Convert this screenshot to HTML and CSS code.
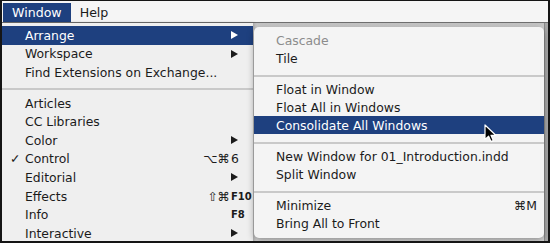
FILE: index.html
```html
<!DOCTYPE html>
<html>
<head>
<meta charset="utf-8" />
<link rel="stylesheet" href="styles.css">
</head>
<body>
<div class="screen">
  <div class="menubar">
    <span class="title active">Window</span>
    <span class="title">Help</span>
  </div>
  <div class="desk">
    <div class="edge"></div>
  </div>

  <!-- Window menu -->
  <div class="menu main">
    <div class="item hl"><span class="chk"></span><span class="label">Arrange</span><span class="arrow"></span></div>
    <div class="item"><span class="chk"></span><span class="label">Workspace</span><span class="arrow"></span></div>
    <div class="item"><span class="chk"></span><span class="label">Find Extensions on Exchange...</span></div>
    <div class="sep"></div>
    <div class="item"><span class="chk"></span><span class="label">Articles</span></div>
    <div class="item"><span class="chk"></span><span class="label">CC Libraries</span></div>
    <div class="item"><span class="chk"></span><span class="label">Color</span><span class="arrow"></span></div>
    <div class="item"><span class="chk">✓</span><span class="label">Control</span><span class="mods">⌥⌘</span><span class="key">6</span></div>
    <div class="item"><span class="chk"></span><span class="label">Editorial</span><span class="arrow"></span></div>
    <div class="item"><span class="chk"></span><span class="label">Effects</span><span class="mods">⇧⌘</span><span class="key small">F10</span></div>
    <div class="item"><span class="chk"></span><span class="label">Info</span><span class="mods"></span><span class="key small">F8</span></div>
    <div class="item"><span class="chk"></span><span class="label">Interactive</span><span class="arrow"></span></div>
  </div>

  <!-- Arrange submenu -->
  <div class="menu sub">
    <div class="item off"><span class="label">Cascade</span></div>
    <div class="item"><span class="label">Tile</span></div>
    <div class="sep"></div>
    <div class="item"><span class="label">Float in Window</span></div>
    <div class="item"><span class="label">Float All in Windows</span></div>
    <div class="item hl"><span class="label">Consolidate All Windows</span>
      <svg class="cursor" width="13" height="19" viewBox="0 0 13 19">
        <path d="M1 1 L1 15.5 L4.6 12.2 L7 17.6 L9.3 16.6 L7 11.3 L11.8 11.3 Z" fill="#000" stroke="#fff" stroke-width="1.2" stroke-linejoin="round"/>
      </svg>
    </div>
    <div class="sep"></div>
    <div class="item"><span class="label">New Window for 01_Introduction.indd</span></div>
    <div class="item"><span class="label">Split Window</span></div>
    <div class="sep"></div>
    <div class="item"><span class="label">Minimize</span><span class="mods">⌘M</span></div>
    <div class="item"><span class="label">Bring All to Front</span></div>
  </div>
</div>
</body>
</html>
```

FILE: styles.css
```css
body {
  margin: 0;
  font-family: "DejaVu Sans", "Liberation Sans", sans-serif;
  font-size: 12.4px;
  color: #1b1b1b;
}
.screen {
  position: relative;
  width: 550px;
  height: 243px;
  box-sizing: border-box;
  border: 2px solid #151515;
  border-top-width: 1px;
  overflow: hidden;
  background: #d2d2d2;
}
.menubar {
  display: flex;
  height: 21px;
  padding-left: 1px;
  background: #f5f5f5;
  border-bottom: 1px solid #6f6f6f;
  font-size: 12.6px;
}
.title {
  margin-top: 2px;
  padding: 0 9px;
  line-height: 19px;
}
.title.active {
  background: #1e407f;
  color: #fff;
}
.desk {
  display: flex;
  justify-content: flex-end;
  height: 100%;
  background: linear-gradient(#c4c4c4, #dadada 8px, #d6d6d6);
}
.edge {
  width: 3px;
  background: #a8a8a8;
  border-left: 1px solid #8a8a8a;
}

.menu {
  position: absolute;
  box-sizing: border-box;
}
.main {
  left: 0;
  top: 22px;
  width: 251px;
  height: 230px;
  padding-top: 3px;
  background: #efefef;
  box-shadow: 1px 0 3px rgba(0,0,0,.25);
}
.sub {
  left: 252px;
  top: 26px;
  width: 290px;
  height: 211px;
  padding-top: 4px;
  background: #f4f4f4;
  border-radius: 5px;
  box-shadow: 0 2px 7px rgba(0,0,0,.35);
}
.item {
  display: flex;
  align-items: center;
  position: relative;
  height: 18.6px;
  padding: 0 8px 0 6px;
}
.sub .item {
  height: 18px;
  padding: 0 7px 0 22px;
}
.item.hl {
  background: #1e407f;
  color: #fff;
}
.item.off {
  color: #8c8c8c;
}
.chk {
  width: 17px;
  padding-left: 2px;
  box-sizing: border-box;
}
.label {
  flex: 1;
  white-space: nowrap;
}
.mods {
  text-align: right;
}
.key {
  width: 14px;
  padding-left: 1px;
}
.key.small {
  font-size: 10px;
  font-weight: bold;
}
.arrow {
  width: 0;
  height: 0;
  margin-right: 7px;
  border-left: 7px solid #1b1b1b;
  border-top: 4.5px solid transparent;
  border-bottom: 4.5px solid transparent;
}
.hl .arrow {
  border-left-color: #fff;
}
.sep {
  height: 12px;
  display: flex;
  align-items: center;
}
.sep::after {
  content: "";
  flex: 1;
  height: 2px;
  margin-top: 2px;
  background: #c9c9c9;
}
.sub .sep {
  height: 13px;
  align-items: flex-end;
  padding-bottom: 3px;
  box-sizing: border-box;
}
.cursor {
  position: absolute;
  left: 230px;
  top: 8px;
}
```
